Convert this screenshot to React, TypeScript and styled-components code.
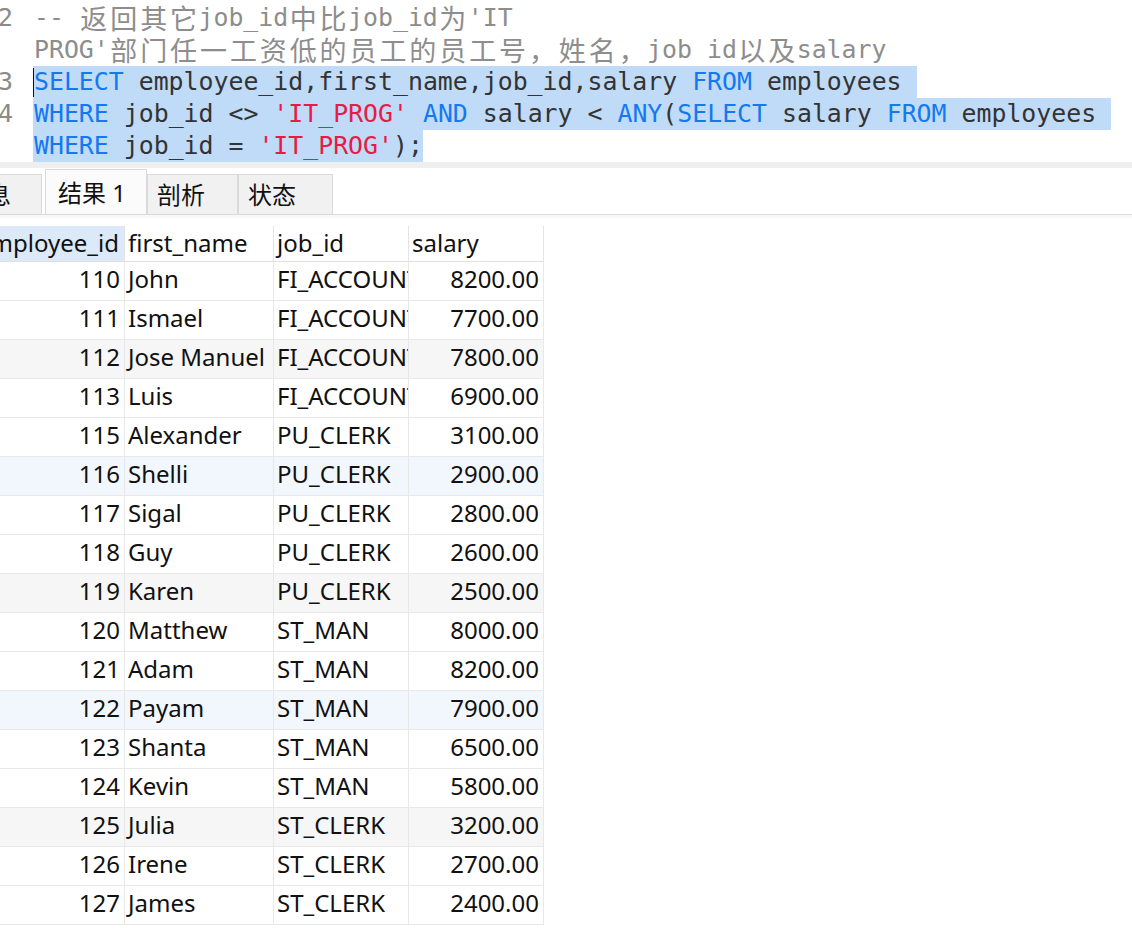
import React from "react";
import styled, { createGlobalStyle } from "styled-components";

const GlobalStyle = createGlobalStyle`
  html, body {
    margin: 0;
    padding: 0;
    background: #fff;
  }
`;

// one monospace cell of the editor font (DejaVu Sans Mono @ 24.85px)
const CELL = 14.96;

const rows: [number, string, string, string][] = [
  [110, "John", "FI_ACCOUNT", "8200.00"],
  [111, "Ismael", "FI_ACCOUNT", "7700.00"],
  [112, "Jose Manuel", "FI_ACCOUNT", "7800.00"],
  [113, "Luis", "FI_ACCOUNT", "6900.00"],
  [115, "Alexander", "PU_CLERK", "3100.00"],
  [116, "Shelli", "PU_CLERK", "2900.00"],
  [117, "Sigal", "PU_CLERK", "2800.00"],
  [118, "Guy", "PU_CLERK", "2600.00"],
  [119, "Karen", "PU_CLERK", "2500.00"],
  [120, "Matthew", "ST_MAN", "8000.00"],
  [121, "Adam", "ST_MAN", "8200.00"],
  [122, "Payam", "ST_MAN", "7900.00"],
  [123, "Shanta", "ST_MAN", "6500.00"],
  [124, "Kevin", "ST_MAN", "5800.00"],
  [125, "Julia", "ST_CLERK", "3200.00"],
  [126, "Irene", "ST_CLERK", "2700.00"],
  [127, "James", "ST_CLERK", "2400.00"]
];

const tabs = [
  { label: "信息", width: 92, active: false },
  { label: "结果 1", width: 102, active: true },
  { label: "剖析", width: 91, active: false },
  { label: "状态", width: 95, active: false }
];

// split text so that wide (CJK) characters take two monospace cells
const mono = (text: string) =>
  Array.from(text).reduce<React.ReactNode[]>((out, ch, i) => {
    if (/[\u3000-\u9fff\uff00-\uffef]/.test(ch)) {
      out.push(<Wide key={i}>{ch}</Wide>);
    } else {
      const last = out[out.length - 1];
      if (typeof last === "string") out[out.length - 1] = last + ch;
      else out.push(ch);
    }
    return out;
  }, []);

const toneOf = (i: number) =>
  i % 3 !== 2 ? "plain" : Math.floor(i / 3) % 2 === 0 ? "gray" : "blue";

const App = () => (
  <Page>
    <GlobalStyle />
    <Editor>
      <Line>
        <Gutter>2</Gutter>
        <Code>
          <Comment>{mono("-- 返回其它job_id中比job_id为'IT")}</Comment>
        </Code>
      </Line>
      <Line>
        <Gutter />
        <Code>
          <Comment>{mono("PROG'部门任一工资低的员工的员工号，姓名，job id以及salary")}</Comment>
        </Code>
      </Line>
      <Line>
        <Gutter>3</Gutter>
        <Code $selected>
          <Caret />
          <Kw>SELECT</Kw> employee_id,first_name,job_id,salary <Kw>FROM</Kw> employees{" "}
        </Code>
      </Line>
      <Line>
        <Gutter>4</Gutter>
        <Code $selected>
          <Kw>WHERE</Kw> job_id {"<>"} <Str>'IT_PROG'</Str> <Kw>AND</Kw> salary {"<"} <Kw>ANY</Kw>(
          <Kw>SELECT</Kw> salary <Kw>FROM</Kw> employees{" "}
        </Code>
      </Line>
      <Line>
        <Gutter />
        <Code $selected>
          <Kw>WHERE</Kw> job_id = <Str>'IT_PROG'</Str>);
        </Code>
      </Line>
    </Editor>
    <Splitter />

    <TabBar>
      {tabs.map((t, i) => (
        <Tab key={t.label} $active={t.active} $w={t.width} $first={i === 0}>
          {t.label}
        </Tab>
      ))}
    </TabBar>
    <TabShadow />

    <Grid>
      <HeaderRow>
        <HeadCell $picked>employee_id</HeadCell>
        <HeadCell>first_name</HeadCell>
        <HeadCell>job_id</HeadCell>
        <HeadCell>salary</HeadCell>
      </HeaderRow>
      {rows.map(([id, name, job, salary], i) => (
        <DataRow key={id} $tone={toneOf(i)}>
          <Cell $right>{id}</Cell>
          <Cell>{name}</Cell>
          <Cell>{job}</Cell>
          <Cell $right>{salary}</Cell>
        </DataRow>
      ))}
    </Grid>
  </Page>
);

const Page = styled.div`
  width: 1132px;
  height: 950px;
  overflow: hidden;
  background: #fff;
`;

const Editor = styled.div`
  padding-top: 2px;
  font-family: "DejaVu Sans Mono", monospace;
  font-size: 24.85px;
  line-height: 32px;
  color: #333;
`;

const Line = styled.div`
  display: flex;
  height: 32px;
  white-space: pre;
`;

const Gutter = styled.div`
  flex: none;
  width: 13px;
  display: flex;
  justify-content: flex-end;
  overflow: hidden;
  color: #8a8a8a;
`;

const Code = styled.div<{ $selected?: boolean }>`
  position: relative;
  margin-left: 20px;
  padding-left: 1px;
  height: 32px;
  background: ${(p) => (p.$selected ? "#bfdbf7" : "transparent")};
`;

const Caret = styled.span`
  position: absolute;
  left: 0;
  top: 2px;
  width: 1px;
  height: 29px;
  background: #111;
`;

const Comment = styled.span`
  color: #8d8d8d;
`;

const Wide = styled.span`
  display: inline-block;
  width: ${CELL * 2}px;
  text-align: center;
  vertical-align: top;
  font-family: "Noto Sans CJK SC", sans-serif;
  font-size: 27px;
  line-height: 31px;
`;

const Kw = styled.span`
  color: #1479f0;
`;

const Str = styled.span`
  color: #ea1a46;
`;

const Splitter = styled.div`
  height: 6px;
  background: #efefef;
  border-bottom: 1px solid #fff;
`;

const TabBar = styled.div`
  display: flex;
  align-items: flex-end;
  height: 45px;
  border-bottom: 1px solid #dcdcdc;
`;

const Tab = styled.div<{ $active: boolean; $w: number; $first: boolean }>`
  box-sizing: border-box;
  flex: none;
  width: ${(p) => p.$w}px;
  height: ${(p) => (p.$active ? 45 : 40)}px;
  margin-left: ${(p) => (p.$first ? "-50px" : "0")};
  margin-right: ${(p) => (p.$first ? "3px" : "0")};
  padding-left: ${(p) => (p.$first || p.$active ? 12 : 9)}px;
  padding-bottom: 2px;
  display: flex;
  align-items: center;
  background: ${(p) => (p.$active ? "#fbfbfb" : "#f1f1f1")};
  border: 1px solid #dadada;
  border-bottom: none;
  font-family: "Noto Sans", "Noto Sans CJK SC", sans-serif;
  font-size: 24px;
  color: #111;
  white-space: nowrap;
`;

const TabShadow = styled.div`
  height: 3px;
  background: #f7f7f7;
  margin-bottom: 8px;
`;

const Grid = styled.div`
  margin-left: -26px;
  width: fit-content;
  font-family: "Noto Sans", sans-serif;
  font-size: 24px;
  color: #111;
`;

const HeaderRow = styled.div`
  display: grid;
  grid-template-columns: 151px 149px 135px 135px;
  height: 36px;
`;

const DataRow = styled(HeaderRow)<{ $tone: string }>`
  height: 39px;
  background: ${(p) =>
    p.$tone === "gray" ? "#f6f6f6" : p.$tone === "blue" ? "#f2f7fd" : "#fff"};
`;

const HeadCell = styled.div<{ $picked?: boolean }>`
  box-sizing: border-box;
  display: flex;
  align-items: center;
  padding: 0 3px 2px;
  border-right: 1px solid #e4e4e4;
  border-bottom: 1px solid #e0e0e0;
  background: ${(p) => (p.$picked ? "#dbe9f8" : "transparent")};
  white-space: nowrap;
  overflow: hidden;
`;

const Cell = styled.div<{ $right?: boolean }>`
  box-sizing: border-box;
  display: flex;
  align-items: center;
  justify-content: ${(p) => (p.$right ? "flex-end" : "flex-start")};
  padding: ${(p) => (p.$right ? "0 4px 5px 3px" : "0 0 5px 3px")};
  border-right: 1px solid #e8e8e8;
  border-bottom: 1px solid #e8e8e8;
  white-space: nowrap;
  overflow: hidden;
`;

export default App;
